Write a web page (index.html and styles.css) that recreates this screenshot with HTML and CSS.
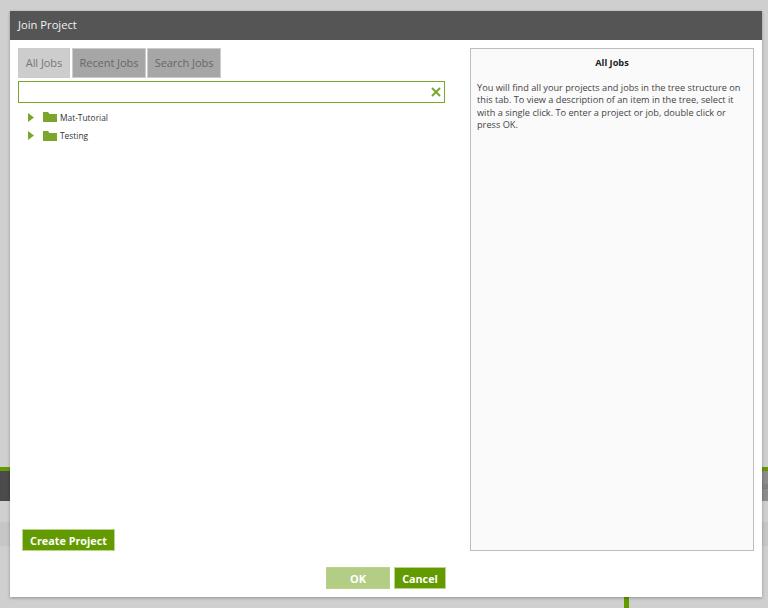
FILE: index.html
```html
<!DOCTYPE html>
<html lang="en">
<head>
<meta charset="utf-8">
<title>Join Project</title>
<link rel="stylesheet" href="styles.css">
</head>
<body>
<div class="backdrop">
  <div class="bg-bar"><div class="bg-bar-end"><span class="bg-bar-text">la</span></div></div>
  <div class="bg-strip"></div>
  <div class="bg-line"></div>
</div>
<section class="dialog">
  <header class="dialog-title">Join Project</header>
  <div class="dialog-body">
    <div class="left">
      <div class="tabs">
        <div class="tab tab-short active">All Jobs</div>
        <div class="tab">Recent Jobs</div>
        <div class="tab">Search Jobs</div>
      </div>
      <div class="search">
        <svg class="clear" width="10" height="10" viewBox="0 0 10 10"><path d="M1 1L9 9M9 1L1 9" stroke="#7aa62d" stroke-width="2" fill="none"/></svg>
      </div>
      <ul class="tree">
        <li class="node">
          <svg class="arrow" width="6" height="9" viewBox="0 0 6 9"><path d="M0 0L6 4.5L0 9Z" fill="#7aa62d"/></svg>
          <svg class="folder" width="14" height="10" viewBox="0 0 14 10"><path d="M0 0H5L6.5 2H14V10H0Z" fill="#7aa62d"/></svg>
          <span>Mat-Tutorial</span>
        </li>
        <li class="node">
          <svg class="arrow" width="6" height="9" viewBox="0 0 6 9"><path d="M0 0L6 4.5L0 9Z" fill="#7aa62d"/></svg>
          <svg class="folder" width="14" height="10" viewBox="0 0 14 10"><path d="M0 0H5L6.5 2H14V10H0Z" fill="#7aa62d"/></svg>
          <span>Testing</span>
        </li>
      </ul>
      <button class="btn create">Create Project</button>
    </div>
    <aside class="info">
      <h2 class="info-title">All Jobs</h2>
      <p class="info-text">You will find all your projects and jobs in the tree structure on this tab. To view a description of an item in the tree, select it with a single click. To enter a project or job, double click or press OK.</p>
    </aside>
  </div>
  <footer class="dialog-foot">
    <button class="btn ok">OK</button>
    <button class="btn cancel">Cancel</button>
  </footer>
</section>
</body>
</html>
```

FILE: styles.css
```css
html, body {
  margin: 0;
  padding: 0;
  height: 100%;
  overflow: hidden;
}
body {
  position: relative;
  background: #cfcfcf;
  font-family: "Open Sans", sans-serif;
  color: #333;
}
.backdrop {
  position: absolute;
  inset: 0;
}
.bg-bar {
  position: absolute;
  left: 0;
  right: 0;
  top: 467px;
  height: 30px;
  background: #4b4b4b;
  border-top: 4px solid #639a00;
}
.bg-bar-end {
  position: absolute;
  right: 0;
  top: 0;
  bottom: 0;
  width: 8px;
  background: #8c8c8c;
}
.bg-bar-text {
  position: absolute;
  right: 0;
  top: 8px;
  font-size: 9px;
  color: #6d6d80;
}
.bg-strip {
  position: absolute;
  left: 0;
  right: 0;
  top: 522px;
  height: 24px;
  background: #c6c6c6;
}
.bg-line {
  position: absolute;
  left: 624px;
  top: 590px;
  bottom: 0;
  width: 5px;
  background: #639a00;
}
.dialog {
  position: absolute;
  left: 10px;
  top: 11px;
  width: 752px;
  height: 586px;
  background: #fff;
  box-shadow: 0 1px 3px rgba(0,0,0,.3);
  display: flex;
  flex-direction: column;
}
.dialog-title {
  height: 29px;
  line-height: 28px;
  flex: none;
  padding-left: 8px;
  background: #555;
  color: #f2f2f2;
  font-size: 11.2px;
}
.dialog-body {
  flex: 1;
  min-height: 0;
  display: flex;
  padding: 8px 8px 16px;
  gap: 25px;
}
.left {
  width: 427px;
  display: flex;
  flex-direction: column;
}
.tabs {
  display: flex;
  gap: 1px;
}
.tab {
  box-sizing: border-box;
  width: 74px;
  height: 30px;
  line-height: 28px;
  text-align: center;
  background: #a6a6a6;
  border: 1px solid #ccc;
  color: #666;
  font-size: 11px;
  letter-spacing: -.05px;
}
.tab.tab-short {
  width: 52px;
  margin-right: 1px;
}
.tab.active {
  background: #cdcdcd;
  color: #777;
}
.search {
  height: 20px;
  margin-top: 3px;
  border: 1px solid #7aa62d;
  display: flex;
  align-items: center;
  justify-content: flex-end;
  padding-right: 3px;
}
.tree {
  list-style: none;
  margin: 5px 0 0;
  padding: 0 0 0 10px;
  flex: 1;
}
.node {
  height: 18.5px;
  display: flex;
  align-items: center;
  font-size: 8.4px;
  color: #333;
}
.arrow { margin-right: 8.5px; }
.folder { margin-right: 3.5px; }
.btn {
  border: 1px solid #b8d58a;
  font-family: inherit;
  font-weight: 700;
  color: #fff;
  font-size: 10.8px;
  background: #639a00;
  padding: 0;
  height: 22px;
}
.create {
  align-self: flex-start;
  margin: 0 0 0 4px;
  width: 93px;
}
.info {
  width: 284px;
  box-sizing: border-box;
  border: 1px solid #bdbdbd;
  background: #fafafa;
  padding: 8px 9px 8px 6px;
  font-size: 9.2px;
  line-height: 12.6px;
}
.info-title {
  margin: 0 -3px 12px 0;
  font-size: 9.2px;
  font-weight: 700;
  text-align: center;
  color: #222;
}
.info-text {
  margin: 0;
  color: #444;
}
.dialog-foot {
  flex: none;
  display: flex;
  justify-content: flex-start;
  gap: 4px;
  padding: 0 0 8px 316px;
}
.ok {
  width: 64px;
  background: #b3cd85;
  font-size: 11px;
}
.cancel {
  width: 52px;
}
```
